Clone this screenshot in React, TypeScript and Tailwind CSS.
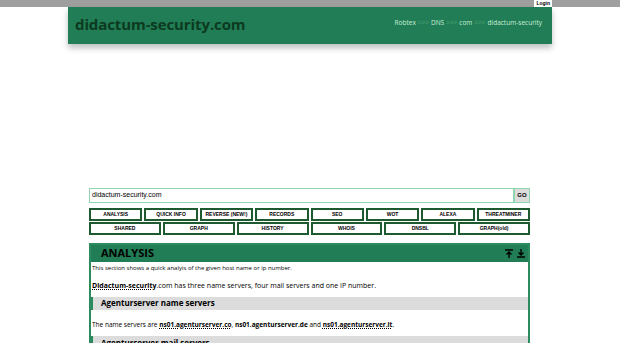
export default function App() {
  const row1 = ["ANALYSIS", "QUICK INFO", "REVERSE (NEW!)", "RECORDS", "SEO", "WOT", "ALEXA", "THREATMINER"];
  const row2 = ["SHARED", "GRAPH", "HISTORY", "WHOIS", "DNSBL", "GRAPH(old)"];
  return (
    <div className="w-[620px] h-[343px] overflow-hidden bg-white font-['Open_Sans',sans-serif]">
      <div className="h-[7px] bg-[#9f9f9f] flex justify-end pr-[68px]">
        <div className="h-[7px] px-[2px] bg-white text-[5px] leading-[7px] font-bold text-black font-['Liberation_Sans',sans-serif]">
          Login
        </div>
      </div>
      <header className="mx-[68px] h-[37px] bg-[#217d55] flex items-center justify-between pl-[7px] pr-[10px] shadow-[0_4px_6px_rgba(0,0,0,0.25)]">
        <div className="text-[15px] font-bold text-[#0c3a1f] tracking-[-0.1px] pb-[2px]">didactum-security.com</div>
        <div className="text-[6.5px] text-[#c8eed8] flex gap-[2px] pb-[5px]">
          <span>Robtex</span>
          <span className="text-[#4fa879]">&gt;&gt;&gt;</span>
          <span>DNS</span>
          <span className="text-[#4fa879]">&gt;&gt;&gt;</span>
          <span>com</span>
          <span className="text-[#4fa879]">&gt;&gt;&gt;</span>
          <span>didactum-security</span>
        </div>
      </header>

      <div className="mt-[144px] ml-[89px] w-[441px] font-['Liberation_Sans',sans-serif]">
        <div className="flex h-[15px]">
          <div className="flex-1 border border-[#8fd6b0] flex items-center px-[2px] text-[7px] text-black">
            didactum-security.com
          </div>
          <div className="w-[16px] bg-[#dcdcdc] border border-[#8fd6b0] flex items-center justify-center text-[6px] font-bold">
            GO
          </div>
        </div>
        <div className="mt-[5px] grid grid-cols-8 gap-x-[2px]">
          {row1.map((b) => (
            <div key={b} className="h-[13px] border-2 border-[#1d5a30] flex items-center justify-center text-[5px] font-bold text-black">
              {b}
            </div>
          ))}
        </div>
        <div className="mt-[1px] grid grid-cols-6 gap-x-[2px]">
          {row2.map((b) => (
            <div key={b} className="h-[13px] border-2 border-[#1d5a30] flex items-center justify-center text-[5px] font-bold text-black">
              {b}
            </div>
          ))}
        </div>

        <div className="mt-[8px] border-2 border-[#2b8a5e] border-b-0">
          <div className="h-[17px] bg-[#217d55] flex items-center justify-between pl-[10px] pr-[3px]">
            <span className="font-['Open_Sans',sans-serif] font-bold text-[11px] text-black">ANALYSIS</span>
            <span className="flex gap-[4px] text-black">
              <svg width="8" height="9" viewBox="0 0 8 9"><path d="M0 1h8M4 9V3M1.5 5.5 4 3l2.5 2.5" stroke="#000" strokeWidth="1.4" fill="none" /></svg>
              <svg width="8" height="9" viewBox="0 0 8 9"><path d="M0 8h8M4 0v6M1.5 3.5 4 6l2.5-2.5" stroke="#000" strokeWidth="1.4" fill="none" /></svg>
            </span>
          </div>
          <div className="text-[6px] text-black pt-[2px] pl-[1px] font-['Open_Sans',sans-serif]">
            This section shows a quick analyis of the given host name or ip number.
          </div>
          <div className="text-[7px] text-black mt-[8px] pl-[1px] font-['Open_Sans',sans-serif]">
            <b className="underline decoration-dotted">Didactum-security</b>.com has three name servers, four mail servers and one IP number.
          </div>
          <div className="mt-[5px] h-[13px] bg-[#dcdcdc] border-l-2 border-[#2b8a5e] flex items-center pl-[8px] text-[8px] font-bold font-['Open_Sans',sans-serif]">
            Agenturserver name servers
          </div>
          <div className="text-[6.5px] text-black mt-[10px] pl-[1px] font-['Open_Sans',sans-serif]">
            The name servers are <b className="underline decoration-dotted">ns01.agenturserver.co</b>, <b>ns01.agenturserver.de</b> and <b className="underline decoration-dotted">ns01.agenturserver.it</b>.
          </div>
          <div className="mt-[7px] h-[13px] bg-[#dcdcdc] border-l-2 border-[#2b8a5e] flex items-center pl-[8px] text-[8px] font-bold font-['Open_Sans',sans-serif]">
            Agenturserver mail servers
          </div>
        </div>
      </div>
    </div>
  );
}
